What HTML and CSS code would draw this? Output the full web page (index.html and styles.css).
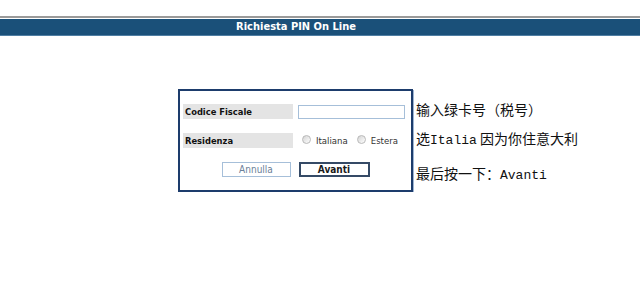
FILE: index.html
```html
<!DOCTYPE html>
<html lang="it">
<head>
    <meta charset="UTF-8">
    <title>Richiesta PIN On Line</title>
    <link rel="stylesheet" href="styles.css">
</head>
<body>
    <div class="topline"></div>
    <div class="titlebar">
        <span class="title">Richiesta PIN On Line</span>
    </div>

    <div class="main">
        <div class="panel">
            <div class="row">
                <div class="label">Codice Fiscale</div>
                <input type="text" class="field">
            </div>
            <div class="row">
                <div class="label">Residenza</div>
                <div class="choices">
                    <span class="radio"></span>
                    <span class="choice">Italiana</span>
                    <span class="radio"></span>
                    <span class="choice">Estera</span>
                </div>
            </div>
            <div class="buttons">
                <button class="btn btn-cancel">Annulla</button>
                <button class="btn btn-next">Avanti</button>
            </div>
        </div>

        <div class="notes">
            <p class="note note-first">输入绿卡号（税号）</p>
            <p class="note">选<span class="mono">Italia</span> 因为你住意大利</p>
            <p class="note note-last">最后按一下：<span class="mono">Avanti</span></p>
        </div>
    </div>
</body>
</html>
```

FILE: styles.css
```css
* {
    box-sizing: border-box;
    margin: 0;
    padding: 0;
}

body {
    font-family: "DejaVu Sans", Verdana, sans-serif;
    background: #fff;
    color: #000;
}

.topline {
    margin-top: 16px;
    height: 2px;
    background-color: #9a9a9a;
}

.titlebar {
    margin-top: 1px;
    height: 17px;
    background-color: #1a5079;
    border-bottom: 1px solid #4f7ea3;
    width: 640px;
}

.title {
    display: block;
    width: 592px;
    text-align: center;
    color: #fff;
    font-family: "DejaVu Sans Condensed", "DejaVu Sans", sans-serif;
    font-weight: bold;
    font-size: 11px;
    line-height: 16px;
}

.main {
    display: flex;
    align-items: flex-start;
    margin-top: 53px;
    padding-left: 178px;
}

.panel {
    width: 235px;
    height: 103px;
    border: 2px solid #1d3c6c;
    box-shadow: 1px 1px 0 #9fb6d3;
    padding: 13px 3px 0 3px;
}

.row {
    display: flex;
    align-items: center;
    height: 15px;
    margin-bottom: 14px;
}

.label {
    width: 110px;
    height: 15px;
    background-color: #e4e4e4;
    font-family: "DejaVu Sans Condensed", "DejaVu Sans", sans-serif;
    font-weight: bold;
    font-size: 9.3px;
    line-height: 15px;
    padding-left: 2px;
    color: #111;
}

.field {
    margin-left: 5px;
    width: 107px;
    height: 14px;
    border: 1px solid #a6bfd9;
    background: #fff;
}

.choices {
    display: flex;
    align-items: center;
    margin-left: 9px;
    font-family: "DejaVu Sans Condensed", "DejaVu Sans", sans-serif;
    font-size: 9.5px;
    color: #333;
}

.radio {
    width: 9px;
    height: 9px;
    border-radius: 50%;
    border: 1px solid #b9b9b9;
    background: linear-gradient(135deg, #d4d4d4, #fff);
    margin-right: 5px;
    margin-top: -3px;
}

.choice {
    margin-right: 9px;
}

.buttons {
    display: flex;
    justify-content: center;
    gap: 8px;
}

.btn {
    height: 15px;
    font-family: "DejaVu Sans Condensed", "DejaVu Sans", sans-serif;
    font-size: 10px;
    line-height: 12px;
    background: #fff;
    cursor: pointer;
}

.btn-cancel {
    width: 69px;
    border: 1px solid #a6bfd9;
    color: #6b7f99;
}

.btn-next {
    width: 71px;
    border: 2px solid #354a66;
    color: #1a1a1a;
    font-weight: bold;
}

.notes {
    margin-left: 3px;
    font-family: "Noto Sans CJK SC", sans-serif;
    font-size: 14px;
    color: #111;
}

.note {
    line-height: 16px;
    margin-top: 13px;
    white-space: nowrap;
}

.note-first {
    margin-top: 12px;
}

.note-last {
    margin-top: 16px;
}

.mono {
    font-family: "Liberation Mono", monospace;
    font-size: 13px;
}
```
